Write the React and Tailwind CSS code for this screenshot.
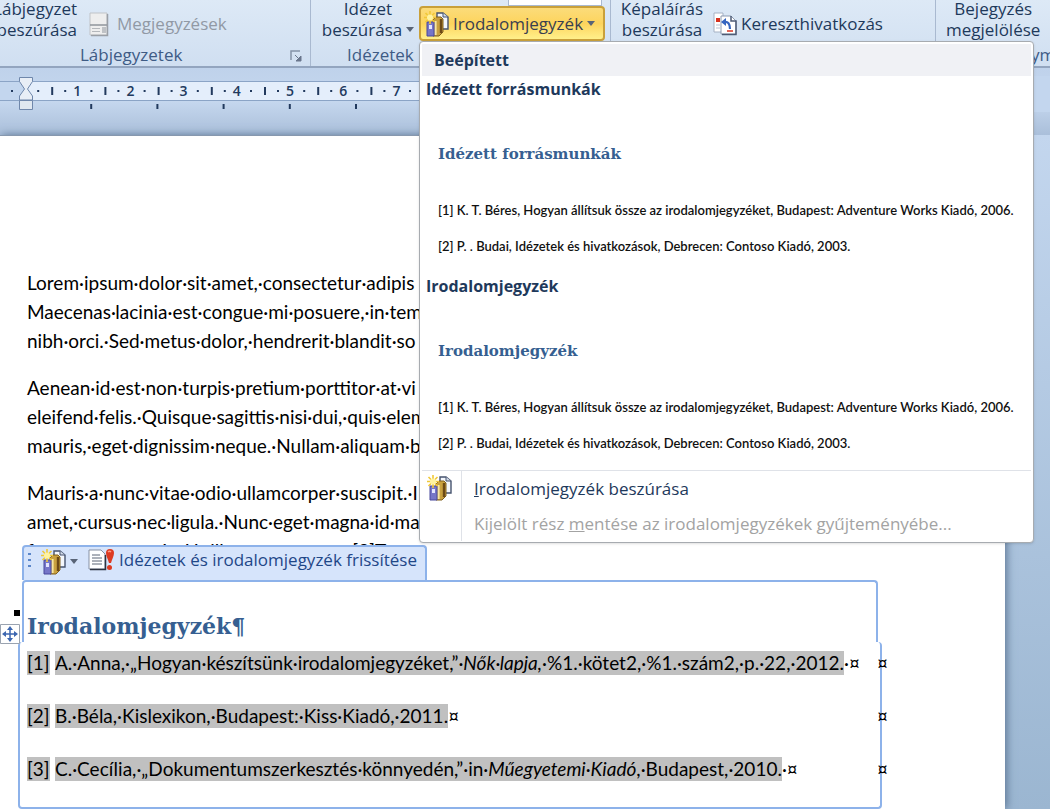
import React from "react";

const UI = "font-['Open_Sans','Noto_Sans',sans-serif]";
const BODY = "font-[Lato,'Open_Sans',sans-serif]";
const SERIF = "font-['DejaVu_Serif','Liberation_Serif',serif]";

const paragraphs = [
  [
    "Lorem·ipsum·dolor·sit·amet,·consectetur·adipis",
    "Maecenas·lacinia·est·congue·mi·posuere,·in·tem",
    "nibh·orci.·Sed·metus·dolor,·hendrerit·blandit·so",
  ],
  [
    "Aenean·id·est·non·turpis·pretium·porttitor·at·vi",
    "eleifend·felis.·Quisque·sagittis·nisi·dui,·quis·elem",
    "mauris,·eget·dignissim·neque.·Nullam·aliquam·b",
  ],
  [
    "Mauris·a·nunc·vitae·odio·ullamcorper·suscipit.·I",
    "amet,·cursus·nec·ligula.·Nunc·eget·magna·id·ma",
    "fermentum·mattis.·Ut·illum·et·non·sem·[2]T",
  ],
];

const sources = [
  {
    id: "[1]",
    text: (
      <>
        A.·Anna,·„Hogyan·készítsünk·irodalomjegyzéket,”·<i>Nők·lapja,</i>
        ·%1.·kötet2,·%1.·szám2,·p.·22,·2012.
      </>
    ),
    tail: "·¤",
  },
  { id: "[2]", text: "B.·Béla,·Kislexikon,·Budapest:·Kiss·Kiadó,·2011.", tail: "¤" },
  {
    id: "[3]",
    text: (
      <>
        C.·Cecília,·„Dokumentumszerkesztés·könnyedén,”·in·<i>Műegyetemi·Kiadó</i>
        ,·Budapest,·2010.
      </>
    ),
    tail: "·¤",
  },
];

const gallery = ["Idézett forrásmunkák", "Irodalomjegyzék"];

function BooksIcon() {
  return (
    <svg width="26" height="26" viewBox="0 0 26 26" className="shrink-0" aria-hidden="true">
      <path d="M14 2h6l5 4v12H14z" fill="#f4f7fc" stroke="#46536e" strokeWidth="1.4" />
      <path d="M20 2v4h5" fill="#d3dcea" stroke="#46536e" />
      <path d="M10 9l3-3h5l2 2v13l-4 4h-6z" fill="#c9a13f" stroke="#80601f" />
      <path d="M12.500 10v14" stroke="#f6e6a4" strokeWidth="2.200" />
      <path d="M18 8v14" stroke="#6d4a16" strokeWidth="2.400" />
      <path d="M4 11h7v14H4z" fill="#7676c8" stroke="#48489c" />
      <path d="M6 14h3v4H6z" fill="#e3e5ff" />
      <path d="M7 0v13M1 6.500h12M2.500 2l9 9M11.500 2l-9 9" stroke="#f0c838" strokeWidth="1.600" />
      <circle cx="7" cy="6.500" r="3" fill="#fff3a0" />
    </svg>
  );
}

function NotesIcon() {
  return (
    <svg width="20" height="25" viewBox="0 0 20 25" className="shrink-0" aria-hidden="true">
      <path d="M1 1h17v22H1z" fill="#eeeeee" stroke="#c0c3c7" />
      <path d="M1 13h17" stroke="#8f949b" strokeWidth="1.500" />
      <path d="M3 16.500h8M3 19.500h8" stroke="#b4b7bb" />
      <path d="M13 15h4v6h-4z" fill="#bfc2c6" />
      <path d="M18.500 2v21.500H2" fill="none" stroke="#9a9fa6" strokeWidth="1.500" />
    </svg>
  );
}

function CrossRefIcon() {
  return (
    <svg width="24" height="24" viewBox="0 0 24 24" className="shrink-0" aria-hidden="true">
      <path d="M1 1h9v19H1z" fill="#fff" stroke="#a5b1c4" />
      <path d="M3 6h4v4H3z" fill="#d8321f" />
      <path d="M3 13h4M3 16h4" stroke="#b8c2d2" />
      <path d="M8 4h10l5 5v13H8z" fill="#fff" stroke="#8d9ab0" />
      <path d="M18 4v5h5v13.500H9" fill="none" stroke="#4d5b75" strokeWidth="1.500" />
      <path d="M11 10c4-1 6 2 6 7" fill="none" stroke="#3565c0" strokeWidth="2.200" />
      <path d="M8 10l5-4v8z" fill="#3565c0" />
      <path d="M14 19h6" stroke="#d8321f" strokeWidth="1.500" />
    </svg>
  );
}

function UpdateIcon() {
  return (
    <svg width="27" height="22" viewBox="0 0 27 22" className="shrink-0" aria-hidden="true">
      <path d="M1 1h12l4 4v15H1z" fill="#fff" stroke="#8791a3" />
      <path d="M17.500 6v14.500H2" fill="none" stroke="#2d3340" strokeWidth="1.500" />
      <path d="M4 6h8M4 9h10M4 12h10M4 15h10" stroke="#5b6474" />
      <path d="M18 4a4 4 0 0 1 8 0c0 3-2 6-3 10h-2c-1-4-3-7-3-10z" fill="#dd3b22" />
      <circle cx="21.500" cy="18.500" r="2.500" fill="#dd3b22" />
      <path d="M20 3c1-1 2-1 3 0" stroke="#ff9d86" strokeWidth="1.500" fill="none" />
    </svg>
  );
}

function Caret() {
  return (
    <svg width="8" height="5" viewBox="0 0 8 5" className="shrink-0" aria-hidden="true">
      <path d="M0 0h8L4 5z" fill="#596477" />
    </svg>
  );
}

function BibliographyMenu() {
  return (
    <div className="absolute top-full left-0 z-20 flex h-[502px] w-[615px] flex-col rounded-sm border border-[#a7abb0] bg-white p-0.5 shadow-sm">
      <h2 className="h-8 shrink-0 bg-[#f0f1f5] pl-3 text-[16px] leading-8 font-bold text-[#1e395b]">Beépített</h2>
      {gallery.map((name) => (
        <button key={name} type="button" className="flex h-[197px] shrink-0 flex-col justify-start px-1 text-left">
          <span className="text-[16px] leading-[26px] font-bold text-[#1e395b]">{name}</span>
          <span className={`mt-[38px] pl-3 text-[15px] leading-7 font-bold text-[#365f91] ${SERIF}`}>{name}</span>
          <span className={`mt-6 pl-3 text-[13px] leading-9 font-semibold whitespace-nowrap text-[#111] ${BODY}`}>
            <span className="block">[1] K. T. Béres, Hogyan állítsuk össze az irodalomjegyzéket, Budapest: Adventure Works Kiadó, 2006.</span>
            <span className="block">[2] P. . Budai, Idézetek és hivatkozások, Debrecen: Contoso Kiadó, 2003.</span>
          </span>
        </button>
      ))}
      <div className="flex flex-1 border-t border-[#dfe2e8] text-[17px]">
        <div className="w-10 shrink-0 border-r border-[#dfe2e8] pt-1 pl-1">
          <BooksIcon />
        </div>
        <div className="flex flex-col items-start pl-3">
          <button type="button" className="h-[35px] text-[#1e395b]">
            <u>I</u>rodalomjegyzék beszúrása
          </button>
          <button type="button" disabled className="h-[35px] text-[#a3a3a3]">
            Kijelölt rész <u>m</u>entése az irodalomjegyzékek gyűjteményébe...
          </button>
        </div>
      </div>
    </div>
  );
}

function Ribbon() {
  return (
    <header className="relative z-10 flex h-[68px] shrink-0 border-b-2 border-[#93a5bf] bg-linear-to-b from-[#dde9f6] to-[#d0dff1] text-[17px] text-[#1e395b]">
      <section className="relative flex w-[311px] shrink-0 border-r border-[#a9b9d0]">
        <button type="button" className="-mt-0.5 -ml-2 h-[42px] w-[85px] text-right leading-[21px] whitespace-nowrap">
          Lábjegyzet
          <br />
          beszúrása
        </button>
        <button type="button" disabled className="ml-3 flex h-10 items-center gap-2 pt-2 text-[#9199a5]">
          <NotesIcon />
          Megjegyzések
        </button>
        <h2 className="absolute bottom-0 left-20 leading-[22px] text-[#3e5b85]">Lábjegyzetek</h2>
        <svg width="12" height="12" viewBox="0 0 12 12" className="absolute right-2 bottom-1" aria-hidden="true">
          <path d="M1 10V1h9" fill="none" stroke="#8492a8" strokeWidth="1.500" />
          <path d="M5 5l4 4M11 6v5H6z" stroke="#6a778d" fill="#6a778d" />
        </svg>
      </section>
      <section className="relative flex w-[300px] shrink-0 border-r border-[#a9b9d0]">
        <button type="button" className="-mt-0.5 ml-2 h-[42px] w-[98px] leading-[21px] whitespace-nowrap">
          Idézet
          <br />
          <span className="inline-flex items-center gap-1">
            beszúrása
            <Caret />
          </span>
        </button>
        <h2 className="absolute bottom-0 left-9 leading-[22px] text-[#3e5b85]">Idézetek</h2>
        <div className="absolute top-0 right-2 h-1.5 w-[94px] border border-t-0 border-[#a9b9d0] bg-white" />
        <div className="relative mt-1.5 ml-0.5 h-[35px]">
          <button
            type="button"
            className="flex h-[35px] w-[186px] items-center gap-1 rounded border-2 border-[#c9a03a] bg-linear-to-b from-[#fbdc7a] via-[#fdd45c] to-[#fff08a] px-0.5 text-[#3a3f50]"
          >
            <BooksIcon />
            <span>Irodalomjegyzék</span>
            <Caret />
          </button>
          <BibliographyMenu />
        </div>
      </section>
      <section className="flex w-[325px] shrink-0 border-r border-[#a9b9d0]">
        <button type="button" className="-mt-0.5 ml-2 h-[42px] w-[86px] leading-[21px] whitespace-nowrap">
          Képaláírás
          <br />
          beszúrása
        </button>
        <button type="button" className="ml-2 flex h-10 items-center gap-1 pt-2">
          <CrossRefIcon />
          Kereszthivatkozás
        </button>
      </section>
      <section className="relative flex-1">
        <button type="button" className="-mt-0.5 ml-2.5 block h-[42px] leading-[21px] whitespace-nowrap">
          Bejegyzés
          <br />
          megjelölése
        </button>
        <h2 className="absolute bottom-0 left-[60px] leading-[22px] text-[#3e5b85]">Tárgymutató</h2>
      </section>
    </header>
  );
}

function Ruler() {
  const marks = [1, 2, 3, 4, 5, 6, 7];
  return (
    <div className="h-[67px] shrink-0 bg-linear-to-b from-[#bfd2eb] via-[#c5d7ee] to-[#aabfda] pt-2">
      <svg width="100%" height="36" className="block" aria-hidden="true">
        <rect x="0" y="6" width="100%" height="19" fill="#c3d6ee" />
        <rect x="26" y="6" width="1008" height="19" fill="#e4eefb" />
        <rect x="0" y="5" width="1034" height="1" fill="#8ba4c6" />
        <rect x="0" y="24" width="1034" height="1" fill="#8ba4c6" />
        <rect x="1034" y="0" width="100%" height="36" fill="#c3d6ee" />
        <rect x="11" y="14" width="2" height="2" fill="#223a5e" />
        {marks.map((n) => (
          <g key={n} fill="#223a5e">
            <rect x={n * 53.2 - 16} y="14" width="2" height="2" />
            <rect x={n * 53.2 - 2} y="11" width="2" height="8" />
            <rect x={n * 53.2 + 11} y="14" width="2" height="2" />
            <text x={n * 53.2 + 24} y="20" fontSize="14" fontWeight="600" textAnchor="middle">
              {n}
            </text>
            <rect x={n * 66.2 + 24} y="28" width="2" height="5" />
          </g>
        ))}
        <rect x="409" y="14" width="2" height="2" fill="#223a5e" />
        <path d="M19.500 1.500h13v4l-5 7.500 5 7v4h-13v-4l5-7-5-7.500z" fill="#e8eef6" stroke="#6f87ab" />
        <path d="M19.500 24.500h13v9h-13z" fill="#dfe7f0" stroke="#6f87ab" />
      </svg>
    </div>
  );
}

function CitationBlock() {
  return (
    <section className="relative -mt-5 mr-[123px] ml-[18px]">
      <div className="ml-1 flex h-[35px] w-[405px] items-center rounded-t border-2 border-b-0 border-[#8db2ea] bg-[#d6e4fb] pb-2 text-[#1f4788]">
        <svg width="4" height="16" viewBox="0 0 4 16" className="ml-1 shrink-0" aria-hidden="true">
          <path d="M0 1h3v2H0zM0 7h3v2H0zM0 13h3v2H0z" fill="#5b86c9" />
        </svg>
        <button type="button" aria-label="Irodalomjegyzékek" className="ml-2 flex items-center gap-1 pt-1">
          <BooksIcon />
          <Caret />
        </button>
        <button type="button" className={`ml-2.5 flex items-center gap-1 text-[17px] leading-6 whitespace-nowrap ${UI}`}>
          <UpdateIcon />
          Idézetek és irodalomjegyzék frissítése
        </button>
      </div>
      <div className="mr-1 ml-1 h-[62px] rounded-t border-2 border-b-0 border-[#8db2ea] bg-white pt-6 pl-[3px]">
        <h1 className={`text-[22px] leading-10 font-bold text-[#365f91] ${SERIF}`}>Irodalomjegyzék¶</h1>
      </div>
      <div className="rounded border-2 border-t-0 border-[#8db2ea] bg-white pt-[9px] pb-[26px] pl-[7px]">
        <div className="-mr-2">
          <table className="w-full border-collapse text-[19px] leading-6 text-black">
            <tbody>
              {sources.map((s, i) => (
                <tr key={s.id}>
                  <td className={i < 2 ? "w-7 pb-[29px]" : "w-7"}>
                    <span className="block w-[23px] bg-[#c0c0c0]">{s.id}</span>
                  </td>
                  <td className="align-top whitespace-nowrap">
                    <span className="inline-block bg-[#c0c0c0]">{s.text}</span>
                    {s.tail}
                  </td>
                  <td className="w-1 align-top">¤</td>
                </tr>
              ))}
            </tbody>
          </table>
        </div>
      </div>
      <span className="absolute top-[65px] -left-1 size-1.5 bg-black" />
      <svg width="20" height="20" viewBox="0 0 20 20" className="absolute top-[79px] -left-[18px]" aria-hidden="true">
        <path d="M.5.5h19v19H.5z" fill="#fff" stroke="#9aa3b0" />
        <path d="M10 4v12M4 10h12" stroke="#3c66b0" strokeWidth="1.500" />
        <path d="M10 2l3 4H7zM10 18l3-4H7zM2 10l4-3v6zM18 10l-4-3v6z" fill="#3c66b0" />
      </svg>
    </section>
  );
}

export default function App() {
  return (
    <div className={`flex h-screen flex-col overflow-hidden bg-[#a9c0dc] ${UI}`}>
      <Ribbon />
      <Ruler />
      <main className="min-h-0 flex-1 bg-linear-to-b from-[#c3d6ee] to-[#9bb6d1] pr-[45px]">
        <article className={`h-full border-t border-[#8798ae] bg-white pt-[132px] shadow-[2px_0_8px_#5f7896] ${BODY}`}>
          {paragraphs.map((lines) => (
            <p key={lines[0]} className="mb-[18px] pl-[27px] text-[19px] leading-[29px] whitespace-nowrap text-black last-of-type:mb-0">
              {lines.map((line) => (
                <span key={line} className="block">
                  {line}
                </span>
              ))}
            </p>
          ))}
          <CitationBlock />
        </article>
      </main>
    </div>
  );
}
